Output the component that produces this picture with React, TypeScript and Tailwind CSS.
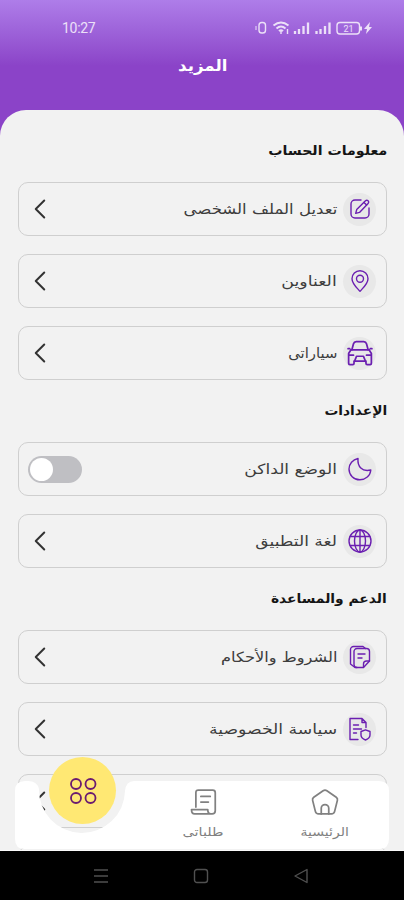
import { type FC, type ReactNode } from 'react';
import { ChevronLeft } from 'lucide-react';

const Icon: FC<{ children: ReactNode; size?: string }> = ({ children, size = 'size-6' }) => (
    <svg viewBox="0 0 24 24" className={size} fill="none" stroke="currentColor" strokeWidth="1.4" strokeLinecap="round" strokeLinejoin="round">
        {children}
    </svg>
);

const EditIcon = () => (
    <Icon>
        <path d="M13 3H7a4 4 0 0 0-4 4v10a4 4 0 0 0 4 4h10a4 4 0 0 0 4-4v-6" />
        <path d="M17.5 3.8a1.8 1.8 0 0 1 2.6 2.6l-8.6 9-3.8 1 1-3.8z" />
        <path d="m16 5.5 2.6 2.6" />
    </Icon>
);

const PinIcon = () => (
    <Icon>
        <path d="M12 22.3c-3.2-3.6-8-7.6-8-12.6a8 8 0 0 1 16 0c0 5-4.800 9-8 12.600z" />
        <circle cx="12" cy="9.8" r="3.5" />
    </Icon>
);

const CarIcon = () => (
    <Icon size="size-[26px]">
        <g strokeWidth="1.6">
            <path d="M4.500 9 6 3.500Q6.600 1.500 8.500 1.500h7q1.900 0 2.500 2L19.500 9" />
            <path d="M1 8h1.500M21.500 8H23M3.500 9.200h17l2 3.300v9q0 1.200-1.200 1.200h-2.600q-1.200 0-1.200-1.200v-2H6.500v2q0 1.200-1.200 1.200H2.700q-1.200 0-1.200-1.200v-9z" />
            <path d="M7 19.500l1.800-4.500h6.400l1.800 4.500M2 14h4M18 14h4" />
        </g>
    </Icon>
);

const MoonIcon = () => (
    <Icon>
        <path d="M10 1.500C4.700 2.500 1 6.800 1 12c0 6 4.800 10.800 10.800 10.800 5.800 0 10.500-4 11-9.800-3.500.8-7.500.5-10-2C10.300 8.500 9.700 5 10 1.500z" />
    </Icon>
);

const GlobeIcon = () => (
    <Icon>
        <circle cx="12" cy="12" r="11" />
        <ellipse cx="12" cy="12" rx="5.5" ry="11" />
        <path d="M12 1v22M2.300 7.500h19.400M2.300 16.500h19.400" />
    </Icon>
);

const TermsIcon = () => (
    <Icon>
        <path d="M9 22.500H7l-4.500-3.500V4.500a3 3 0 0 1 3-3H15l2.500 2" />
        <path d="M9 3.500h9.500a3 3 0 0 1 3 3V16L15.500 22.500H9a3 3 0 0 1-3-3v-13a3 3 0 0 1 3-3z" />
        <path d="M15.500 22v-3a3 3 0 0 1 3-3h3M10 9h7M10 13h4" />
    </Icon>
);

const PrivacyIcon = () => (
    <Icon>
        <path d="M10 22.500H2v-21h12l4 4v5M14 1.500V5.500h4M5.500 8h5M5.500 12h8M5.500 16h3" />
        <path d="M17.500 12.800l4.500 1.700v3.500c0 2.500-2 4-4.500 5-2.500-1-4.500-2.500-4.500-5v-3.500z" />
    </Icon>
);

const Heading: FC<{ children: ReactNode; fit: string }> = ({ children, fit }) => (
    <h2 className="flex h-[62px] shrink-0 items-center text-[13px] font-bold text-[#151515]">
        <span className={`block origin-right whitespace-nowrap ${fit}`}>{children}</span>
    </h2>
);

interface RowProps {
    icon?: ReactNode;
    label?: string;
    fit?: string;
    toggle?: boolean;
}

const Row: FC<RowProps> = ({ icon, label, fit = '', toggle }) => (
    <div className="flex h-[54px] shrink-0 items-center rounded-[10px] border border-[#cfcfcf] bg-[#f2f2f2] pr-[10px] pl-[9px]">
        <div className="flex size-[33px] items-center justify-center rounded-full bg-[#e8e8e8] text-[#6b1fb1]">{icon}</div>
        <div className="mr-[6px] flex-1 text-[14px] text-[#3d3d3d]">
            <span className={`block w-fit origin-right whitespace-nowrap ${fit}`}>{label}</span>
        </div>
        {toggle ? (
            <div className="flex h-[27px] w-[54px] items-center justify-end rounded-full bg-[#bfbfc3] p-[2px]">
                <div className="size-[23px] rounded-full bg-white" />
            </div>
        ) : (
            <ChevronLeft size={34} strokeWidth={1.4} className="-ml-[5px] text-[#333333]" />
        )}
    </div>
);

const StatusBar = () => (
    <div dir="ltr" className="flex h-[56px] items-center justify-between pr-[31px] pl-[62px] text-white/80">
        <span className="font-['Roboto',sans-serif] text-[14px] tracking-[-0.3px]">10:27</span>
        <svg width="120" height="16" viewBox="0 0 120 16" fill="none" stroke="currentColor" strokeWidth="1.4">
            <rect x="6" y="2.500" width="6.500" height="10.500" rx="2.800" />
            <path d="M3 6v4" strokeWidth="1" />
            <path d="M20.500 5.500q7.500-6 15 0M23.500 8.500q4.500-4 9 0M26 11.200q2-2 4 0" strokeWidth="1.900" />
            <path d="M28 11v3M34.500 9v5" />
            <path d="M42 14v-3M46 14v-5M50.500 14V6M55 14V2.500M63.500 14v-3M67.500 14v-5M72 14V6M76.500 14V2.500" strokeWidth="2.300" />
            <rect x="84" y="2.500" width="22.500" height="11.500" rx="3" />
            <path d="M108 6.500v4" strokeWidth="2" />
            <text x="95.500" y="11.500" fontSize="9" textAnchor="middle" fill="currentColor" stroke="none" fontFamily="Roboto, sans-serif">21</text>
            <path d="m117 2-6 7h3l-1 5 6-7h-3z" fill="currentColor" stroke="none" />
        </svg>
    </div>
);

const BottomNav = () => (
    <div className="absolute inset-x-0 top-[757px] h-[94px]">
        <svg width="404" height="94" viewBox="0 0 404 94" className="absolute inset-0">
            <path d="M25 24h3q9 0 11 8a43 43 0 1 0 86 2q1-10 9-10h245q10 0 10 10v48q0 10-10 10H25q-10 0-10-10V34q0-10 10-10z" fill="#fff" />
            <path d="M0 93.500h404" stroke="#fafafa" />
        </svg>
        <div className="absolute top-0 left-[49px] flex size-[67px] items-center justify-center rounded-full bg-[#ffe873]">
            <svg width="28" height="28" viewBox="0 0 28 28" fill="none" stroke="#6b1b70" strokeWidth="1.8">
                <circle cx="7" cy="7" r="5" />
                <circle cx="21.5" cy="7" r="5" />
                <circle cx="7" cy="21" r="5" />
                <circle cx="21.5" cy="21" r="5" />
            </svg>
        </div>
        <div className="absolute top-[30px] left-[294px] flex w-[61px] flex-col items-center text-[#818181]">
            <Icon size="size-[30px]">
                <path d="M10.500 3q1.500-1 3 0l7.500 5.200q1.300 1 .9 2.500l-2.200 8.800q-.5 2-2.500 2H6.800q-2 0-2.500-2l-2.200-8.800q-.4-1.500.9-2.500z" />
                <path d="M9 21.500V17a3 3 0 0 1 6 0v4.500" />
            </Icon>
            <span className="mt-[4px] scale-x-[1.17] text-[12px] leading-[22px] whitespace-nowrap">الرئيسية</span>
        </div>
        <div className="absolute top-[30px] left-[173px] flex w-[61px] flex-col items-center text-[#818181]">
            <Icon size="size-[30px]">
                <path d="M5.500 16V4.500q0-2 2-2H19q2 0 2 2V19q0 2.500-2.500 2.500H4.500q-2.500 0-2.500-3.500h13q0 3.500 2.500 3.500M9.500 7.500h7.500M9.500 12h6" />
            </Icon>
            <span className="mt-[4px] scale-x-[1.2] text-[12px] leading-[22px] whitespace-nowrap">طلباتى</span>
        </div>
    </div>
);

const App = () => (
    <div dir="rtl" className="relative flex h-[900px] w-[404px] flex-col overflow-hidden bg-[#8b43c8] font-['DejaVu_Sans',sans-serif]">
        <header className="h-[110px] shrink-0 bg-linear-to-b from-[#ae7de9] to-[#8b43c8] to-[60%]">
            <StatusBar />
            <h1 className="flex h-[20px] items-center justify-center text-[16px] font-bold text-white">
                <span className="mr-[-2px] block scale-x-[1.04]">المزيد</span>
            </h1>
        </header>
        <main className="flex h-[741px] shrink-0 flex-col overflow-hidden rounded-t-[26px] bg-[#f2f2f2] pt-[10px] pr-[17px] pl-[18px]">
            <Heading fit="scale-x-[1.09]">معلومات الحساب</Heading>
            <div className="flex shrink-0 flex-col gap-[18px]">
                <Row icon={<EditIcon />} label="تعديل الملف الشخصى" fit="scale-x-[1.18]" />
                <Row icon={<PinIcon />} label="العناوين" fit="scale-x-[1.24]" />
                <Row icon={<CarIcon />} label="سياراتى" fit="scale-x-[1.06]" />
            </div>
            <Heading fit="scale-x-[1.06]">الإعدادات</Heading>
            <div className="flex shrink-0 flex-col gap-[18px]">
                <Row icon={<MoonIcon />} label="الوضع الداكن" fit="scale-x-[1.22]" toggle />
                <Row icon={<GlobeIcon />} label="لغة التطبيق" fit="scale-x-[1.22]" />
            </div>
            <Heading fit="scale-x-[1.065]">الدعم والمساعدة</Heading>
            <div className="flex shrink-0 flex-col gap-[18px]">
                <Row icon={<TermsIcon />} label="الشروط والأحكام" fit="scale-x-[1.16]" />
                <Row icon={<PrivacyIcon />} label="سياسة الخصوصية" fit="scale-x-[1.23]" />
                <Row />
                <Row />
            </div>
        </main>
        <BottomNav />
        <footer dir="ltr" className="flex h-[49px] shrink-0 items-center justify-center gap-[84px] bg-black pr-[3px] text-[#505050]">
            <svg width="16" height="16" viewBox="0 0 16 16" stroke="currentColor" strokeWidth="1.5"><path d="M1 2h14M1 8h14M1 14h14" /></svg>
            <svg width="16" height="16" viewBox="0 0 16 16" fill="none" stroke="currentColor" strokeWidth="1.4"><rect x="1.5" y="1.5" width="13" height="13" rx="2.5" /></svg>
            <svg width="16" height="16" viewBox="0 0 16 16" fill="none" stroke="currentColor" strokeWidth="1.4" strokeLinejoin="round"><path d="M14 1.500v13L2 8z" /></svg>
        </footer>
    </div>
);

export default App;
